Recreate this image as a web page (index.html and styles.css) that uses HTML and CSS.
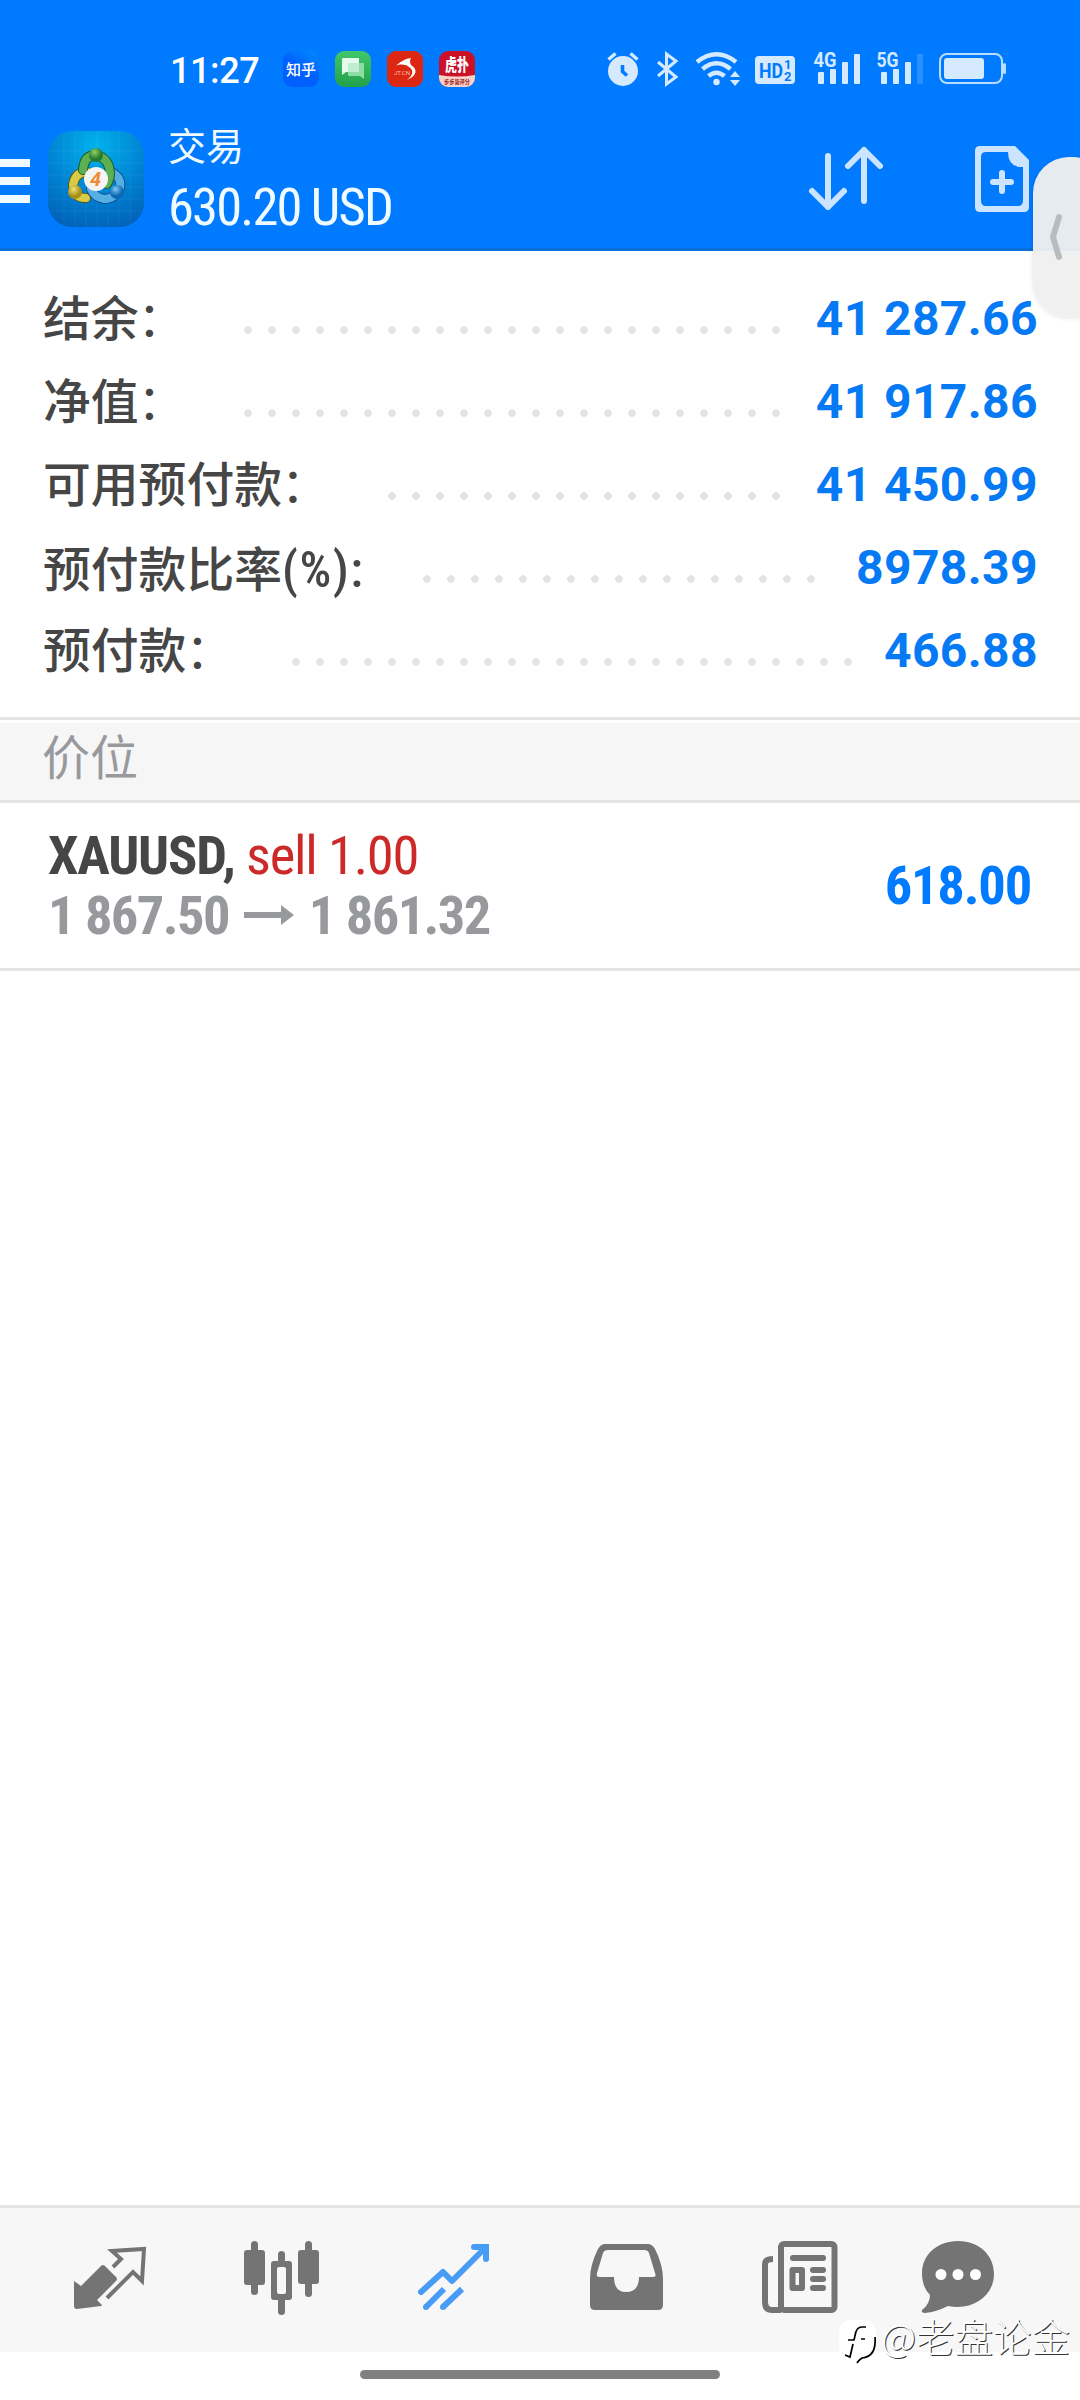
FILE: index.html
```html
<!DOCTYPE html>
<html lang="zh-CN">
<head>
<meta charset="UTF-8" />
<title>交易</title>
<link rel="stylesheet" href="styles.css">
</head>
<body>
<div id="screen">
	<div id="header">
		<div class="status">
			<div class="time">11:27</div>
			<div class="apps">
				<div class="app zhihu">知乎</div>
				<svg class="app" viewBox="0 0 36 36">
					<defs><linearGradient id="green" x2="0" y2="1"><stop stop-color="#41c76a"/><stop offset="1" stop-color="#22a04a"/></linearGradient></defs>
					<rect width="36" height="36" rx="9" fill="url(#green)"/>
					<path d="M14 12h14q1 0 1 1v15l-4-3H14q-1 0-1-1V13q0-1 1-1z" fill="#8ddda5"/>
					<path d="M8 7h15q1 0 1 1v12q0 1-1 1H11l-4 3V8q0-1 1-1z" fill="#e6fbec"/>
					<rect x="13" y="12" width="11" height="9" fill="#c1eed0"/>
				</svg>
				<svg class="app" viewBox="0 0 36 36">
					<rect width="36" height="36" rx="9" fill="#dc2712"/>
					<path d="M9 15C13 11 17 8 24 7q-2 3 0 7c7 4 6 11-4 15 5-4 8-9 2-13-4-3-9-3-13-1z" fill="#fff"/>
					<text x="7" y="24" class="jt">JT.CN</text>
				</svg>
				<svg class="app" viewBox="0 0 36 36">
					<defs><clipPath id="round"><rect width="36" height="36" rx="9"/></clipPath></defs>
					<g clip-path="url(#round)">
						<rect width="36" height="36" fill="#cb1028"/>
						<path d="M0 24q18 3 36 0v12H0z" fill="#f6d3c8"/>
					</g>
					<text x="6" y="20" class="hp" textLength="24" lengthAdjust="spacingAndGlyphs">虎扑</text>
					<text x="5" y="33" class="hp2" textLength="26" lengthAdjust="spacingAndGlyphs">步步皆评分</text>
				</svg>
			</div>
			<div class="signals">
				<svg width="32" height="40" viewBox="607 50 32 40">
					<circle cx="623" cy="71" r="15" fill="#d6eaff"/>
					<path d="M608.500 59.500l7-6M637.500 59.500l-7-6" stroke="#d6eaff" stroke-width="3.500"/>
					<path d="M622.500 65v6.500l4.500 4" fill="none" stroke="#007aff" stroke-width="3.600"/>
				</svg>
				<svg width="22" height="40" viewBox="656 50 22 40">
					<path d="M658 62l18 15-9.500 7V54l9.500 7-18 15" fill="none" stroke="#d6eaff" stroke-width="3"/>
				</svg>
				<svg width="46" height="40" viewBox="696 50 46 40" fill="none" stroke="#d6eaff" stroke-width="4.500">
					<path d="M698 62q19.500-15.500 39 0M703.500 69q14-11.500 28 0M709.500 76q8-6.500 16 0"/>
					<circle cx="717.500" cy="82" r="3.200" fill="#d6eaff" stroke="none"/>
					<path d="M731 77l5-6 5 6zM731 80l5 6 5-6z" fill="#d6eaff" stroke="none"/>
				</svg>
				<svg width="40" height="40" viewBox="756 50 40 40">
					<rect x="756" y="56" width="40" height="28" rx="4" fill="#d6eaff"/>
					<text x="760" y="77.500" class="hd" textLength="24" lengthAdjust="spacingAndGlyphs">HD</text>
					<text x="785" y="69" class="hdn">1</text>
					<text x="785" y="81" class="hdn">2</text>
				</svg>
				<svg width="48" height="40" viewBox="814 50 48 40" fill="#d6eaff">
					<text x="814.500" y="67" class="net" textLength="23" lengthAdjust="spacingAndGlyphs">4G</text>
					<rect x="819" y="72" width="6" height="12" rx="1"/>
					<rect x="831" y="69" width="6" height="15" rx="1"/>
					<rect x="843" y="62" width="6" height="22" rx="1"/>
					<rect x="855" y="54" width="6" height="30" rx="1"/>
				</svg>
				<svg width="48" height="40" viewBox="877 50 48 40" fill="#d6eaff">
					<text x="877.500" y="67" class="net" textLength="22" lengthAdjust="spacingAndGlyphs">5G</text>
					<rect x="882" y="72" width="6" height="12" rx="1"/>
					<rect x="894" y="69" width="6" height="15" rx="1"/>
					<rect x="906" y="62" width="6" height="22" rx="1"/>
					<rect x="918" y="54" width="6" height="30" rx="1" opacity=".2"/>
				</svg>
				<svg width="68" height="40" viewBox="940 50 68 40">
					<rect x="941" y="54" width="62" height="29" rx="7" fill="none" stroke="#b9ddff" stroke-width="2"/>
					<rect x="945" y="58" width="40" height="21" rx="3" fill="#d6eaff"/>
					<rect x="1004" y="63" width="3" height="11" rx="1.500" fill="#b9ddff"/>
				</svg>
			</div>
		</div>
		<div class="bar">
			<div class="menu"><i></i><i></i><i></i></div>
			<svg class="logo" width="96" height="96" viewBox="0 0 96 96">
				<defs>
					<radialGradient id="bg" cx=".5" cy=".15" r=".9"><stop stop-color="#00b2ee"/><stop offset=".6" stop-color="#007fd0"/><stop offset="1" stop-color="#0062b8"/></radialGradient>
					<radialGradient id="lg" cx=".4" cy=".3"><stop stop-color="#8fd06f"/><stop offset="1" stop-color="#267a2c"/></radialGradient>
					<radialGradient id="ly" cx=".4" cy=".3"><stop stop-color="#f2e37a"/><stop offset="1" stop-color="#a89018"/></radialGradient>
					<radialGradient id="lb" cx=".4" cy=".3"><stop stop-color="#7cc8f2"/><stop offset="1" stop-color="#0a68b0"/></radialGradient>
				</defs>
				<rect width="96" height="96" rx="24" fill="url(#bg)"/>
				<path d="M16 2v92M27 0v96M38 0v96M49 0v96M60 0v96M71 0v96M82 2v92M2 20h92M0 32h96M0 44h96M0 56h96M0 68h96M2 80h92" stroke="#fff" stroke-opacity=".06"/>
				<g fill="none" stroke-linecap="round">
					<path d="M38 67Q25 67 25 54 27 41 39 41" stroke="#5f5a12" stroke-width="10"/>
					<path d="M38 67Q25 67 25 54 27 41 39 41" stroke="#d9cb45" stroke-width="8"/>
					<path d="M63 41Q74 46 72 57 67 68 56 68 46 66 43 58" stroke="#0b4e86" stroke-width="10"/>
					<path d="M63 41Q74 46 72 57 67 68 56 68 46 66 43 58" stroke="#55aee4" stroke-width="8"/>
					<path d="M35 39Q36 24 48 24 61 27 62 42 62 48 59 53" stroke="#1c5a22" stroke-width="10"/>
					<path d="M35 39Q36 24 48 24 61 27 62 42 62 48 59 53" stroke="#5cb054" stroke-width="8"/>
				</g>
				<circle cx="48" cy="24" r="7" fill="url(#lg)"/>
				<circle cx="27" cy="61" r="7" fill="url(#ly)"/>
				<circle cx="69" cy="61" r="7" fill="url(#lb)"/>
				<circle cx="48" cy="48" r="12" fill="#f4f4f4"/>
				<text x="42" y="55" class="four">4</text>
			</svg>
			<div class="title">
				<div class="name">交易</div>
				<div class="profit">630.20 USD</div>
			</div>
			<svg class="sort" width="76" height="72" viewBox="808 144 76 72" fill="none" stroke="#cce4ff" stroke-width="6" stroke-linecap="round" stroke-linejoin="round">
				<path d="M828 156v51M812 191l16 16 16-16M864 201v-51M848 166l16-16 16 16"/>
			</svg>
			<svg class="add" width="56" height="72" viewBox="975 144 56 72">
				<path fill="#cce4ff" fill-rule="evenodd" d="M980 146h35l14 14v47q0 5-5 5h-44q-5 0-5-5v-56q0-5 5-5zM986 152q-5 0-5 5v43q0 6 5 6h32q5 0 5-6v-33h-4q-11-2-11-15z"/>
				<path d="M1002 173v18M993 182h18" stroke="#cce4ff" stroke-width="6" stroke-linecap="round"/>
			</svg>
		</div>
	</div>

	<div id="account">
		<div class="row"><span class="label">结余<i>：</i></span><span class="dots"></span><span class="value">41 287.66</span></div>
		<div class="row"><span class="label">净值<i>：</i></span><span class="dots"></span><span class="value">41 917.86</span></div>
		<div class="row free"><span class="label">可用预付款<i>：</i></span><span class="dots"></span><span class="value">41 450.99</span></div>
		<div class="row level"><span class="label">预付款比率<b>(%):</b></span><span class="dots"></span><span class="value">8978.39</span></div>
		<div class="row margin"><span class="label">预付款<i>：</i></span><span class="dots"></span><span class="value">466.88</span></div>
	</div>

	<div id="section">价位</div>

	<div id="position">
		<div class="deal">
			<div class="symbol"><b>XAUUSD,</b> <span class="sell">sell 1.00</span></div>
			<div class="prices">
				<span>1 867.50</span>
				<svg width="50" height="22" viewBox="0 0 50 22"><path d="M0 8h37V1l13 10-13 10v-7H0z" fill="#98999d"/></svg>
				<span>1 861.32</span>
			</div>
		</div>
		<div class="result">618.00</div>
	</div>

	<div id="tabs">
		<svg viewBox="24 2208 172 144" fill="#747474">
			<path d="M74 2281l7 5 20-20q2-2 4 0l11 11q2 2 0 4l-19 19 5 5q0 1-1 1l-24 3q-3 0-3-3z"/>
			<path d="M113 2267l8-8-9-8 32-2-2 32-9-9-26 26" fill="none" stroke="#747474" stroke-width="4"/>
		</svg>
		<svg viewBox="196 2208 172 144" fill="#747474">
			<rect x="244" y="2250" width="21" height="35" rx="3"/><rect x="251" y="2241" width="7" height="54" rx="3.500"/>
			<rect x="298" y="2250" width="21" height="34" rx="3"/><rect x="305" y="2241" width="7" height="56" rx="3.500"/>
			<rect x="278" y="2251" width="7" height="12" rx="3.500"/><rect x="278" y="2297" width="7" height="18" rx="3.500"/>
			<path fill-rule="evenodd" d="M274 2261h15q3 0 3 3v33q0 3-3 3h-15q-3 0-3-3v-33q0-3 3-3zM279 2267q-2 0-2 2v23q0 2 2 2h5q2 0 2-2v-23q0-2-2-2z"/>
		</svg>
		<svg viewBox="368 2208 172 144" fill="none" stroke="#489cf5" stroke-width="6">
			<path d="M421 2292l22-20 9 9 33-33" stroke-linejoin="round" stroke-linecap="round"/>
			<path d="M474 2247h12v12" stroke-linecap="round"/>
			<path d="M426 2307l18-18M443 2307l19-18"/>
			<g fill="#489cf5" stroke="none"><circle cx="426" cy="2307" r="3"/><circle cx="443" cy="2307" r="3"/></g>
		</svg>
		<svg viewBox="540 2208 172 144" fill="#747474">
			<path fill-rule="evenodd" d="M605 2244h43q4 0 7 5 8 16 8 30v26q0 5-5 5h-63q-5 0-5-5v-26q0-14 8-30 3-5 7-5zM608 2250q-4 0-5 3l-6 20q-1 4 2 4h15q0 15 12 15 13 0 13-15h14q4 0 2-4l-6-20q-1-3-5-3z"/>
		</svg>
		<svg viewBox="712 2208 172 144" fill="none" stroke="#747474" stroke-width="6">
			<rect x="781" y="2244" width="53.500" height="66" rx="3"/>
			<path d="M773 2259q-8 0-8 5v38q0 8 7 8h9"/>
			<path d="M793 2258h30M813 2270h10M813 2279h10M813 2288h10" stroke-linecap="round"/>
			<rect x="792.500" y="2270" width="9.500" height="18" stroke-linejoin="round"/>
		</svg>
		<svg viewBox="884 2208 172 144">
			<path d="M958 2241c22 0 36 15 36 33 0 21-20 37-46 32q-12 6-23 7-4 0-3-3 8-6 8-15-8-8-8-22c0-18 15-32 36-32z" fill="#747474"/>
			<circle cx="941" cy="2274.500" r="5.500" fill="#fff"/><circle cx="958" cy="2274.500" r="5.500" fill="#fff"/><circle cx="975.500" cy="2274.500" r="5.500" fill="#fff"/>
		</svg>
	</div>
	<div id="home"><i></i></div>

	<div id="drawer">
		<svg width="14" height="48" viewBox="0 0 14 48"><path d="M10 4L4 24l6 20" fill="none" stroke="#b8bbbf" stroke-width="6" stroke-linecap="round" stroke-linejoin="round"/></svg>
	</div>
	<div id="watermark">
		<svg width="38" height="44" viewBox="0 0 38 44">
			<rect width="37" height="38" rx="12" fill="#fff"/>
			<path d="M27 7h-4q-6 0-7 9M9 20h6l1-4M22 19h4M14 24l-3 13-5-2M36 17c1 12-2 20-13 21q-3 2-5 5" fill="none" stroke="#000" stroke-width="1.700"/>
		</svg>
		<span>@老盘论金</span>
	</div>
</div>
</body>
</html>
```
FILE: styles.css
```css
body{margin:0;background:#fff;}
body,div,span{font-family:Roboto,"Noto Sans CJK SC",sans-serif;}
svg{display:block;flex:none;overflow:visible;}
#screen{position:relative;width:1080px;height:2400px;overflow:hidden;display:flex;flex-direction:column;}

#header{box-sizing:border-box;height:251px;flex:none;background:#007aff;border-bottom:3px solid #0a6fd8;}
.status{height:110px;box-sizing:border-box;padding:50px 72px 0 170px;display:flex;}
.time{width:113px;font-size:36px;line-height:42px;font-weight:500;letter-spacing:-.4px;color:#fff;white-space:nowrap;}
.apps{display:flex;gap:16px;padding-top:1px;}
.app{width:36px;height:36px;border-radius:9px;}
.zhihu{background:linear-gradient(30deg,#0060ff 50%,#008cff);color:#fff;font:500 15px/35px "Noto Sans CJK SC",sans-serif;text-align:center;}
.jt{font:6px Roboto,sans-serif;fill:#ffb9a8;}
.hp{font:900 17px "Noto Sans CJK SC",sans-serif;fill:#fff;}
.hp2{font:bold 6px "Noto Sans CJK SC",sans-serif;fill:#a02020;}
.signals{display:flex;margin-left:auto;margin-right:1px;gap:17px;}
.signals svg:nth-child(4){margin-left:-3px;}
.signals svg:nth-child(5){margin-left:1px;}
.signals svg:nth-child(6),.signals svg:nth-child(7){margin-left:-2px;}
.hd{font:bold 21px Roboto,sans-serif;fill:#007aff;}
.hdn{font:bold 13px Roboto,sans-serif;fill:#007aff;}
.net{font:bold 21px Roboto,sans-serif;}
.bar{height:138px;display:flex;align-items:flex-start;}
.menu{width:30px;padding:49px 18px 0 0;display:flex;flex-direction:column;gap:10px;}
.menu i{height:8px;background:#f0faff;}
.logo{margin-top:21px;}
.four{font:bold italic 20px Roboto,sans-serif;fill:#f08a35;}
.title{padding:13px 0 0 24px;color:#f0fbff;width:561px;white-space:nowrap;}
.name{font-size:38px;line-height:48px;}
.profit{font-size:52.500px;line-height:62px;font-stretch:75%;letter-spacing:-1.800px;margin-top:5px;}
.sort{margin:34px 0 0 79px;}
.add{margin:34px 0 0 91px;}

#account{height:466px;box-sizing:border-box;padding:26px 42px 0 43px;flex:none;}
.row{height:83px;display:grid;grid-template-columns:193px 552px 1fr;grid-template-rows:83px;align-items:center;}
.free{grid-template-columns:337px 408px 1fr;}
.level{grid-template-columns:372px 408px 1fr;}
.margin{grid-template-columns:241px 576px 1fr;}
.label{font-size:47.800px;color:#464646;font-weight:500;font-family:"Noto Sans CJK SC",sans-serif;white-space:nowrap;line-height:83px;margin-top:-6px;}
.level .label{margin-top:-3px;}
.label i{font-style:normal;font-weight:400;margin-left:-1px;}
.label b{font-family:Roboto,sans-serif;font-size:50px;line-height:1;font-stretch:75%;font-weight:500;letter-spacing:1.500px;}
.dots{height:8px;margin-top:23px;background:radial-gradient(circle at 12px 4px,#e4e4e4 3.500px,transparent 4px) 0 0/24px 8px repeat-x;}
.value{text-align:right;font-size:48px;font-weight:700;letter-spacing:.4px;color:#067af5;white-space:nowrap;}

#section{box-sizing:border-box;height:86px;flex:none;border-top:3px solid #e4e4e4;border-bottom:3px solid #e4e4e4;background:#f6f6f7;box-shadow:inset 0 3px #fff;padding-left:42px;font-size:48px;line-height:77px;color:#98999d;}

#position{box-sizing:border-box;height:168px;flex:none;border-bottom:3px solid #e4e4e4;padding:22px 49px 0 48px;display:flex;justify-content:space-between;font-size:54.500px;font-stretch:75%;letter-spacing:-1.200px;white-space:nowrap;}
.symbol{line-height:60px;color:#464646;}
.sell{color:#cc2929;}
.prices{display:flex;align-items:center;gap:15px;line-height:60px;font-weight:700;letter-spacing:-1.600px;color:#98999d;}
.result{font-weight:700;color:#007aff;line-height:120px;}

#tabs{box-sizing:border-box;height:147px;flex:none;margin-top:auto;border-top:3px solid #e4e4e4;background:#f7f7f7;padding:0 24px;display:flex;}
#tabs svg{width:172px;height:144px;}
#home{height:48px;flex:none;}
#home i{display:block;width:360px;height:9px;margin:18px auto 0;border-radius:5px;background:#808080;}

#drawer{position:absolute;left:1033px;top:157px;width:60px;height:160px;border-radius:36px;background:rgba(239,239,239,.96);box-shadow:0 1px 5px rgba(0,0,0,.12);display:flex;align-items:center;padding-left:16px;}
#watermark{position:absolute;left:839px;top:2320px;display:flex;gap:4px;color:#fff;font-size:38.500px;line-height:30px;white-space:nowrap;text-shadow:1px 1px 0 #333;}
#watermark span{font-family:"Noto Sans CJK SC",sans-serif;font-weight:300;}
```
